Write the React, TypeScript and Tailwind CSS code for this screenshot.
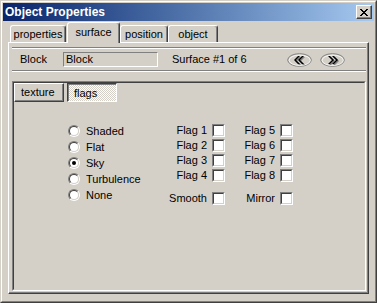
import type { ReactNode } from "react";

function Radio({ checked }: { checked?: boolean }) {
  return (
    <span className="flex h-[12px] w-[12px] shrink-0 rounded-full border border-t-[#808080] border-l-[#808080] border-r-white border-b-white">
      <span className="flex flex-1 items-center justify-center rounded-full border border-t-[#404040] border-l-[#404040] border-r-[#d4d0c8] border-b-[#d4d0c8] bg-white">
        {checked ? <span className="h-[4px] w-[4px] rounded-full bg-black" /> : null}
      </span>
    </span>
  );
}

function Check() {
  return (
    <span className="flex h-[13px] w-[13px] shrink-0 border border-t-[#808080] border-l-[#808080] border-r-white border-b-white">
      <span className="flex-1 border border-t-[#404040] border-l-[#404040] border-r-[#d4d0c8] border-b-[#d4d0c8] bg-white" />
    </span>
  );
}

function Etched() {
  return <div className="ml-[3px] mr-px h-[2px] border-t border-b border-t-[#808080] border-b-white" />;
}

function Tab({ width, selected, children }: { width: string; selected?: boolean; children: ReactNode }) {
  if (selected) {
    return (
      <div
        className={`relative z-10 -mb-px ml-px flex h-[21px] items-center justify-center rounded-t-[3px] border-t border-l border-r border-t-white border-l-white border-r-[#404040] bg-[#d4d0c8] pb-[2px] shadow-[inset_-1px_0_#808080] ${width}`}
      >
        {children}
      </div>
    );
  }
  return (
    <div
      className={`flex h-[17px] items-center justify-center rounded-t-[3px] border-t border-l border-r border-t-white border-l-white border-r-[#404040] shadow-[inset_-1px_0_#808080] ${width}`}
    >
      {children}
    </div>
  );
}

function Chevrons({ dir }: { dir: "left" | "right" }) {
  const a = dir === "left" ? "11,3 7,7 11,11 13,11 9,7 13,3" : "14,3 18,7 14,11 12,11 16,7 12,3";
  const b = dir === "left" ? "15,3 11,7 15,11 17,11 13,7 17,3" : "10,3 14,7 10,11 8,11 12,7 8,3";
  return (
    <svg width="25" height="14" viewBox="0 0 25 14">
      <ellipse cx="12.5" cy="7" rx="11.8" ry="6.3" fill="#d4d0c8" stroke="#808080" strokeWidth="1" />
      <ellipse cx="12.7" cy="7.3" rx="10.6" ry="5.2" fill="none" stroke="#ffffff" strokeWidth="0.8" />
      <g transform="translate(1 1)" fill="#808080">
        <polygon points={a} />
        <polygon points={b} />
      </g>
      <g fill="#000000">
        <polygon points={a} />
        <polygon points={b} />
      </g>
    </svg>
  );
}

const flagRows: [string, string][] = [
  ["Flag 1", "Flag 5"],
  ["Flag 2", "Flag 6"],
  ["Flag 3", "Flag 7"],
  ["Flag 4", "Flag 8"],
];

export default function App() {
  return (
    <div className="h-[303px] w-[377px] border border-t-[#d4d0c8] border-l-[#d4d0c8] border-r-[#404040] border-b-[#404040] bg-[#d4d0c8] font-['Liberation_Sans',Arial,sans-serif] text-[11px] leading-none text-black">
      <div className="flex h-full flex-col border border-t-white border-l-white border-r-[#808080] border-b-[#808080] p-px">
        {/* title bar */}
        <div className="flex h-[18px] items-center justify-between bg-linear-to-r from-[#0a246a] to-[#a6caf0] pl-[2px] pr-[2px]">
          <span className="text-[12px] font-bold text-white">Object Properties</span>
          <div className="flex h-[14px] w-[16px] items-center justify-center border border-t-white border-l-white border-r-[#404040] border-b-[#404040] bg-[#d4d0c8] shadow-[inset_-1px_-1px_#808080]">
            <svg width="8" height="7" viewBox="0 0 8 7" shapeRendering="crispEdges">
              <path
                d="M0 0h2v1H0zM6 0h2v1H6zM1 1h2v1H1zM5 1h2v1H5zM2 2h4v1H2zM3 3h2v1H3zM2 4h4v1H2zM1 5h2v1H1zM5 5h2v1H5zM0 6h2v1H0zM6 6h2v1H6z"
                fill="#000"
              />
            </svg>
          </div>
        </div>

        {/* tabs */}
        <div className="flex h-[21px] items-end pl-[7px]">
          <Tab width="w-[56px]">properties</Tab>
          <Tab width="w-[53px]" selected>
            surface
          </Tab>
          <Tab width="w-[48px]">position</Tab>
          <Tab width="w-[50px]">object</Tab>
        </div>

        {/* tab panel */}
        <div className="mx-[5px] h-[252px] border-t border-l border-r border-b border-t-white border-l-white border-r-[#404040] border-b-[#404040]">
          <div className="flex h-full flex-col border-r border-b border-r-[#808080] border-b-[#808080]">
            <div className="mt-[4px]">
              <Etched />
            </div>
            <div className="mt-[3px] flex h-[15px] items-center pl-[11px]">
              <span className="w-[43px]">Block</span>
              <div className="flex h-[15px] w-[95px] items-center border border-t-[#808080] border-l-[#808080] border-r-white border-b-white pl-[2px]">
                Block
              </div>
              <span className="ml-[14px] w-[115px]">Surface #1 of 6</span>
              <Chevrons dir="left" />
              <span className="ml-[8px]">
                <Chevrons dir="right" />
              </span>
            </div>
            <div className="mt-[3px]">
              <Etched />
            </div>

            {/* inner panel */}
            <div className="ml-[3px] mr-px mt-[9px] h-[210px] border border-t-[#808080] border-l-[#808080] border-r-white border-b-white">
              <div className="h-full border border-t-[#404040] border-l-[#404040] border-r-[#d4d0c8] border-b-[#d4d0c8]">
                <div className="flex">
                  <div className="flex h-[19px] w-[50px] items-center border border-t-white border-l-white border-r-[#404040] border-b-[#404040] pl-[6px] shadow-[inset_-1px_-1px_#808080]">
                    texture
                  </div>
                  <div className="ml-[3px] flex h-[19px] w-[50px] items-center border border-t-[#404040] border-l-[#404040] border-r-white border-b-white bg-[image:repeating-conic-gradient(#ffffff_0_25%,#d4d0c8_0_50%)] bg-[length:2px_2px] pl-[6px] pt-px shadow-[inset_1px_1px_#808080]">
                    flags
                  </div>
                </div>

                <div className="ml-[54px] mt-[21px] flex">
                  <div className="flex w-[92px] flex-col">
                    {["Shaded", "Flat", "Sky", "Turbulence", "None"].map((label) => (
                      <div key={label} className="flex h-[16px] items-center gap-[6px]">
                        <Radio checked={label === "Sky"} />
                        <span>{label}</span>
                      </div>
                    ))}
                  </div>
                  <div className="flex flex-col gap-[2px] pt-px">
                    {flagRows.map(([a, b]) => (
                      <div key={a} className="flex">
                        <div className="flex h-[13px] w-[65px] items-center justify-end gap-[5px]">
                          <span>{a}</span>
                          <Check />
                        </div>
                        <div className="flex h-[13px] w-[68px] items-center justify-end gap-[5px]">
                          <span>{b}</span>
                          <Check />
                        </div>
                      </div>
                    ))}
                    <div className="mt-[8px] flex">
                      <div className="flex h-[13px] w-[65px] items-center justify-end gap-[5px]">
                        <span>Smooth</span>
                        <Check />
                      </div>
                      <div className="flex h-[13px] w-[68px] items-center justify-end gap-[5px]">
                        <span>Mirror</span>
                        <Check />
                      </div>
                    </div>
                  </div>
                </div>
              </div>
            </div>
          </div>
        </div>
      </div>
    </div>
  );
}
